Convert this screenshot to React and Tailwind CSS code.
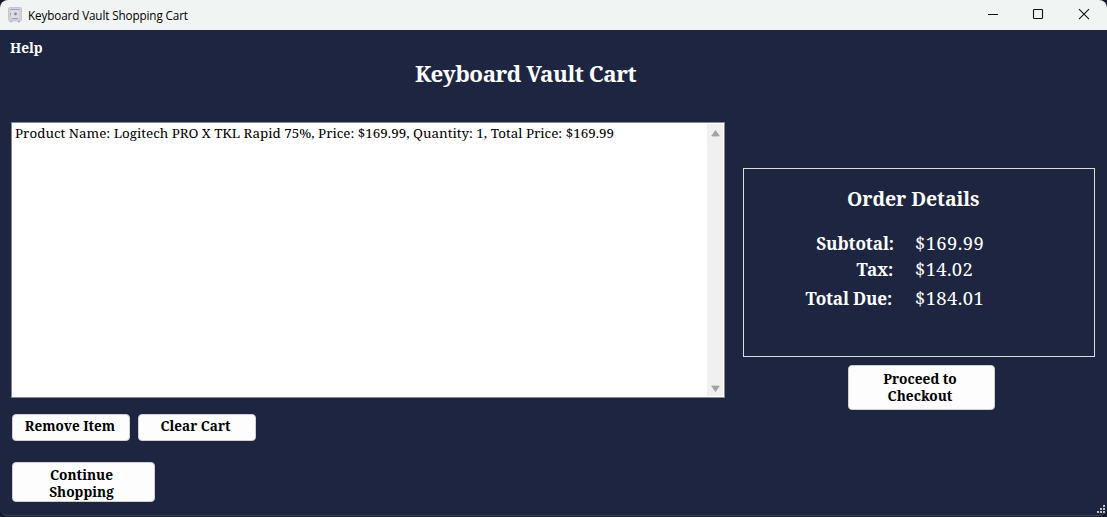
const serif = "font-['Noto_Serif',Cambria,'DejaVu_Serif_Condensed',serif]";

function SafeIcon() {
  return (
    <svg width="14" height="16" viewBox="0 0 14 16" className="shrink-0">
      <rect x="0.5" y="0.5" width="13" height="13.5" rx="1.5" fill="#d3d2d6" stroke="#c6c5ca" />
      <rect x="2.5" y="2.5" width="9" height="9.5" fill="#dddce1" stroke="#cdccd2" strokeWidth="0.7" />
      <path d="M2.5 2.5h9M4 11.5h6" stroke="#a092e6" strokeWidth="1.1" />
      <circle cx="7.5" cy="7" r="1.4" fill="#8b8992" />
      <path d="M2.5 6.2v2" stroke="#9a98a0" />
      <path d="M2 14h2v1.2H2zM10 14h2v1.2h-2z" fill="#aaa9ae" />
    </svg>
  );
}

function TitleBar() {
  return (
    <header className="flex h-[30px] shrink-0 items-center bg-[#f0f4f3] pl-2">
      <SafeIcon />
      <span className="ml-1.5 grow whitespace-nowrap pb-px font-['Open_Sans',sans-serif] text-[11.7px] leading-4 tracking-[-0.12px] text-black">
        Keyboard Vault Shopping Cart
      </span>
      <svg width="138" height="30" viewBox="0 0 138 30" fill="none" stroke="#111">
        <path d="M19 14.5h10" />
        <rect x="64.5" y="9.5" width="9" height="9" rx="0.8" strokeWidth="1.1" />
        <path d="M110 9.2l10 10M120 9.2l-10 10" strokeWidth="1.1" />
      </svg>
    </header>
  );
}

function Button({ className, children }) {
  return (
    <button
      className={`flex items-center justify-center rounded-[4px] border border-[#d0d0d0] bg-[#fdfdfd] text-center leading-[17px] font-bold text-black ${className}`}
    >
      {children}
    </button>
  );
}

function CartList() {
  return (
    <div className="flex h-[276px] w-[714px] justify-between border border-[#828790] bg-white p-px">
      <p className="pl-0.5 text-[13.4px] leading-[18px] tracking-[0.01px] whitespace-nowrap text-black">
        Product Name: Logitech PRO X TKL Rapid 75%, Price: $169.99, Quantity: 1, Total Price: $169.99
      </p>
      <div className="flex w-4 flex-col items-center justify-between bg-[#f0f0f0] pt-1.5 pb-1">
        <svg width="9" height="7" viewBox="0 0 9 7"><path d="M4.5 0.5L8.3 6H0.7z" fill="#a3a3a3" stroke="#a3a3a3" strokeWidth="0.8" strokeLinejoin="round" /></svg>
        <svg width="9" height="7" viewBox="0 0 9 7"><path d="M4.5 6.5L8.3 1H0.7z" fill="#a3a3a3" stroke="#a3a3a3" strokeWidth="0.8" strokeLinejoin="round" /></svg>
      </div>
    </div>
  );
}

function OrderDetails() {
  return (
    <section className="h-[189px] w-[352px] border border-[#dcdcdc] pt-[17px]">
      <h2 className="pl-[103px] text-[19.5px] leading-[26px] font-bold tracking-[-0.08px]">Order Details</h2>
      <dl className="mt-[18px] grid grid-cols-[150px_1fr] grid-rows-[26px_28px_30px] gap-x-[21px] leading-[27px]">
        <dt className="text-right text-[17.2px] font-bold tracking-[-0.1px]">Subtotal:</dt>
        <dd className="-mt-px text-[18.4px] tracking-[0.4px]">$169.99</dd>
        <dt className="pr-px text-right text-[17.2px] font-bold tracking-[-0.2px]">Tax:</dt>
        <dd className="-mt-px text-[18.4px] tracking-[0.35px]">$14.02</dd>
        <dt className="pt-px pr-0.5 text-right text-[17.2px] font-bold tracking-[-0.2px]">Total Due:</dt>
        <dd className="text-[18.4px] tracking-[0.4px]">$184.01</dd>
      </dl>
    </section>
  );
}

function ResizeGrip() {
  return (
    <svg width="8" height="8" viewBox="0 0 8 8" fill="#c4c4c4">
      <path d="M6 0h2v2h-2zM3 3h2v2h-2zM6 3h2v2h-2zM0 6h2v2h-2zM3 6h2v2h-2zM6 6h2v2h-2z" />
    </svg>
  );
}

export default function App() {
  return (
    <div className="h-[517px] w-[1107px] overflow-hidden bg-[#171a2c]">
      <div className={`flex h-[516px] flex-col overflow-hidden rounded-[8px] border-b border-[#41434f] bg-[#1d2541] text-white ${serif}`}>
        <TitleBar />
        <nav className="h-8 pt-[9px] pl-2.5 text-[13.7px] leading-[18px] font-bold">Help</nav>
        <h1 className="h-[60px] pl-[415px] text-[22.4px] leading-[24px] font-bold tracking-[-0.48px]">Keyboard Vault Cart</h1>
        <main className="flex gap-[18px] pl-[11px]">
          <div>
            <CartList />
            <div className="mt-4 ml-px flex gap-2">
              <Button className="h-[27px] w-[118px] pr-0.5 pb-0.5 text-[13.5px]">Remove Item</Button>
              <Button className="h-[27px] w-[118px] pr-[3px] pb-0.5 text-[13.5px]">Clear Cart</Button>
            </div>
            <Button className="mt-[21px] ml-px h-10 w-[143px] pt-px pr-1 text-[13.7px]">Continue<br />Shopping</Button>
          </div>
          <div className="pt-[46px]">
            <OrderDetails />
            <Button className="mt-2 ml-[105px] h-[45px] w-[147px] pr-[3px] pb-px text-[13.7px]">Proceed to<br />Checkout</Button>
          </div>
        </main>
        <footer className="flex grow items-end justify-end pr-0.5 pb-0.5">
          <ResizeGrip />
        </footer>
      </div>
    </div>
  );
}
